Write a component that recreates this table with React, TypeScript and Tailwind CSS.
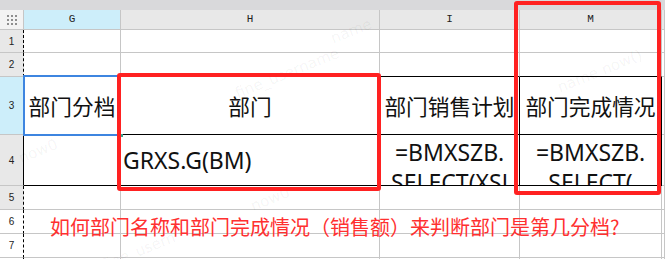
import React from "react";

const GRAY = "border-[#c6c6c6]";

type Cell = {
  cls?: string;
  content?: React.ReactNode;
};

const cjk = { fontFamily: '"Noto Sans CJK SC", "Noto Sans", sans-serif' };
const latin = { fontFamily: '"Noto Sans", "Noto Sans CJK SC", sans-serif' };

function RowHead({ n, cls }: { n: number; cls: string }) {
  return (
    <div
      className={`flex items-center justify-center border-b ${GRAY} text-[10px] text-[#222] ${cls}`}
      style={{ fontFamily: '"Liberation Sans", sans-serif' }}
    >
      {n}
    </div>
  );
}

function C({ cls = "", children }: { cls?: string; children?: React.ReactNode }) {
  return <div className={`overflow-hidden border-r border-b ${cls}`}>{children}</div>;
}

function Watermark({ x, y, text }: { x: number; y: number; text: string }) {
  return (
    <div
      className="pointer-events-none absolute -rotate-[22deg] whitespace-nowrap text-[15px] text-[#000]/[0.05]"
      style={{ left: x, top: y, fontFamily: '"DejaVu Sans", sans-serif' }}
    >
      {text}
    </div>
  );
}

export default function App() {
  return (
    <div className="relative h-[259px] w-[665px] overflow-hidden bg-white">
      {/* toolbar strip */}
      <div className="h-[10px] bg-[#d9d9db]" />

      <div className="grid grid-cols-[24px_97px_259px_140px_142px_1fr] grid-rows-[20px_23px_24px_58px_51px_24px_24px_24px_40px]">
        {/* column headers */}
        <div className={`flex items-center justify-center border-r border-b ${GRAY} bg-[#f3f3f3]`}>
          <div className="grid grid-cols-3 gap-[2px]">
            {Array.from({ length: 9 }).map((_, i) => (
              <div key={i} className="h-[2px] w-[2px] bg-[#8e8e8e]" />
            ))}
          </div>
        </div>
        {["G", "H", "I", "M", ""].map((l, i) => (
          <div
            key={i}
            className={`flex items-center justify-center border-r border-b ${GRAY} text-[11px] text-[#222] ${
              i === 0 ? "bg-[#cdeefa]" : "bg-[#e8e8e8]"
            }`}
            style={{ fontFamily: '"Liberation Mono", monospace' }}
          >
            {l}
          </div>
        ))}

        {/* row 1 */}
        <RowHead n={1} cls="border-r border-r-black border-dashed bg-[#e8e8e8] [border-bottom-style:solid]" />
        <C cls={GRAY} />
        <C cls={GRAY} />
        <C cls={GRAY} />
        <C cls={GRAY} />
        <C cls={GRAY} />

        {/* row 2 */}
        <RowHead n={2} cls="border-r border-r-black border-dashed bg-[#e8e8e8] [border-bottom-style:solid]" />
        <C cls={GRAY} />
        <C cls={`${GRAY} border-b-black`} />
        <C cls={`${GRAY} border-b-black`} />
        <C cls={`${GRAY} border-b-black`} />
        <C cls={GRAY} />

        {/* row 3 */}
        <RowHead n={3} cls="border-r border-r-[#3d85e0] bg-[#cdeefa]" />
        <C cls={`${GRAY} flex items-center justify-center`}>
          <span className="whitespace-nowrap text-[21.7px] leading-none text-[#111]" style={cjk}>
            部门分档
          </span>
        </C>
        <C cls="border-black flex items-center justify-center">
          <span className="whitespace-nowrap text-[21.7px] leading-none text-[#111]" style={cjk}>
            部门
          </span>
        </C>
        <C cls="border-black flex items-center justify-center">
          <span className="whitespace-nowrap text-[21.7px] leading-none text-[#111]" style={cjk}>
            部门销售计划
          </span>
        </C>
        <C cls="border-black flex items-center justify-center">
          <span className="whitespace-nowrap text-[21.7px] leading-none text-[#111]" style={cjk}>
            部门完成情况
          </span>
        </C>
        <C cls={GRAY} />

        {/* row 4 */}
        <RowHead n={4} cls="border-r border-r-black bg-[#e8e8e8]" />
        <C cls={`${GRAY} border-b-black`} />
        <C cls="border-black flex items-center pl-[2px]">
          <span className="whitespace-nowrap text-[23px] leading-none text-[#111]" style={latin}>
            GRXS.G(BM)
          </span>
        </C>
        <C cls="border-black flex flex-col items-center pt-[2px]">
          {["=BMXSZB.", "SELECT(XSJ"].map((t) => (
            <span key={t} className="whitespace-nowrap text-[23px] leading-[30px] text-[#111]" style={latin}>
              {t}
            </span>
          ))}
        </C>
        <C cls="border-black flex flex-col items-center pt-[2px]">
          {["=BMXSZB.", "SELECT("].map((t) => (
            <span key={t} className="whitespace-nowrap text-[23px] leading-[30px] text-[#111]" style={latin}>
              {t}
            </span>
          ))}
        </C>
        <C cls={GRAY} />

        {/* rows 5 - 8 */}
        {[5, 6, 7, 8].map((n) => (
          <React.Fragment key={n}>
            <RowHead
              n={n}
              cls={`border-r border-r-black border-dashed [border-bottom-style:solid] ${
                n === 5 ? "bg-[#e8e8e8]" : "bg-white"
              }`}
            />
            <C cls={GRAY} />
            <C cls={GRAY} />
            <C cls={GRAY} />
            <C cls={GRAY} />
            <C cls={GRAY} />
          </React.Fragment>
        ))}
      </div>

      {/* faint watermark */}
      <Watermark x={232} y={62} text="fine_username" />
      <Watermark x={330} y={20} text="name" />
      <Watermark x={555} y={60} text="name  now()" />
      <Watermark x={18} y={140} text="now0" />
      <Watermark x={250} y={188} text="now0" />
      <Watermark x={100} y={240} text="fine_usern" />

      {/* active cell selection */}
      <div className="pointer-events-none absolute left-[23px] top-[75px] h-[61px] w-[98px] border-2 border-[#3d85e0]" />
      <div className="pointer-events-none absolute left-[120px] top-[134px] h-[3px] w-[3px] bg-[#3aa38f]" />

      {/* highlight frames */}
      <div className="pointer-events-none absolute left-[117px] top-[73px] h-[118px] w-[264px] rounded-[3px] border-4 border-[#ff2121]" />
      <div className="pointer-events-none absolute left-[514px] top-[1px] h-[194px] w-[147px] rounded-[3px] border-4 border-[#ff2121]" />

      {/* annotation */}
      <div
        className="pointer-events-none absolute left-[50px] top-[217px] whitespace-nowrap text-[20px] leading-[20px] text-[#ff3030]"
        style={cjk}
      >
        如何部门名称和部门完成情况（销售额）来判断部门是第几分档?
      </div>
    </div>
  );
}
